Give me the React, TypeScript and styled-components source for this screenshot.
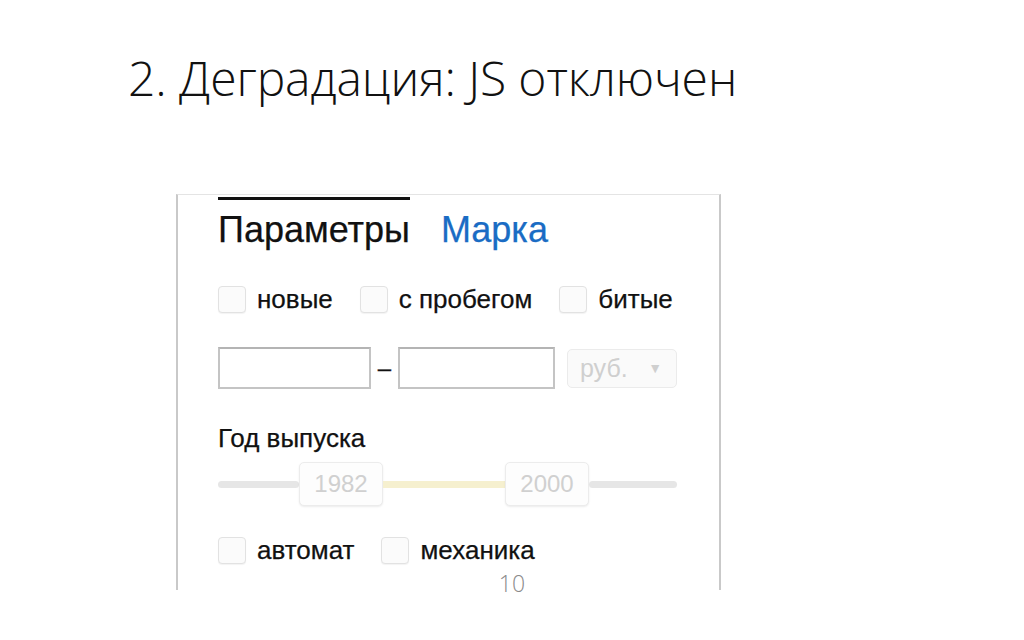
import styled, { createGlobalStyle } from 'styled-components';

const GlobalStyle = createGlobalStyle`
  html, body {
    margin: 0;
    padding: 0;
    background: #ffffff;
  }
`;

const Slide = styled.div`
  position: relative;
  width: 1024px;
  height: 640px;
  overflow: hidden;
  background: #ffffff;
`;

const Title = styled.h1`
  margin: 0;
  padding: 46px 0 0 128px;
  font-family: 'Open Sans', sans-serif;
  font-weight: 300;
  font-size: 48px;
  line-height: 64px;
  color: #111;
  letter-spacing: -0.1px;
`;

const Shot = styled.div`
  box-sizing: border-box;
  margin: 84px 0 0 176px;
  width: 545px;
  height: 396px;
  border-top: 1px solid #e4e4e4;
  border-left: 2px solid #c9c9c9;
  border-right: 2px solid #c9c9c9;
  padding-left: 40px;
  display: flex;
  flex-direction: column;
  font-family: 'Liberation Sans', Arial, sans-serif;
  color: #111;
  -webkit-text-stroke: 0.25px currentColor;
`;

const Tabs = styled.div`
  display: flex;
  gap: 31px;
  margin-top: 2px;
`;

const Tab = styled.div<{ $active?: boolean }>`
  border-top: 3px solid ${p => (p.$active ? '#111' : 'transparent')};
  padding-top: 10px;
  font-size: 36px;
  line-height: 40px;
  color: ${p => (p.$active ? '#111' : '#1a6cc4')};
`;

const Row = styled.div<{ $mt: number }>`
  display: flex;
  align-items: center;
  margin-top: ${p => p.$mt}px;
`;

const Check = styled.label`
  display: flex;
  align-items: center;
  margin-right: 27px;
  font-size: 26px;
  line-height: 27px;
`;

const Box = styled.span`
  box-sizing: border-box;
  width: 28px;
  height: 27px;
  margin-right: 11px;
  border: 1px solid #e2e2e2;
  border-radius: 4px;
  background: #fbfbfb;
  box-shadow: 0 1px 1px rgba(0, 0, 0, 0.05);
`;

const Input = styled.div<{ $w: number }>`
  box-sizing: border-box;
  width: ${p => p.$w}px;
  height: 42px;
  border: 2px solid #c4c4c4;
  border-top-color: #b4b4b4;
  background: #fff;
`;

const Dash = styled.span`
  width: 27px;
  text-align: center;
  font-size: 24px;
  line-height: 30px;
`;

const Select = styled.div`
  box-sizing: border-box;
  width: 110px;
  height: 39px;
  margin-left: 12px;
  padding: 0 14px 0 12px;
  display: flex;
  align-items: center;
  justify-content: space-between;
  border: 1px solid #ebebeb;
  border-radius: 5px;
  background: #fafafa;
  color: #cfcfcf;
  font-size: 25px;
  -webkit-text-stroke: 0;
`;

const Arrow = styled.span`
  font-size: 14px;
  color: #cfcfcf;
`;

const Label = styled.div`
  margin-top: 35px;
  font-size: 26px;
  line-height: 28px;
`;

const Slider = styled.div`
  display: flex;
  align-items: center;
  margin-top: 10px;
  height: 44px;
`;

const Track = styled.div<{ $w: number; $range?: boolean }>`
  width: ${p => p.$w}px;
  height: 7px;
  background: ${p => (p.$range ? '#f6f0cf' : '#e6e6e6')};
  border-radius: ${p => (p.$range ? '0' : '4px')};
`;

const Handle = styled.div`
  box-sizing: border-box;
  width: 84px;
  height: 44px;
  display: flex;
  align-items: center;
  justify-content: center;
  border: 1px solid #ececec;
  border-radius: 5px;
  background: #fdfdfd;
  box-shadow: 0 1px 2px rgba(0, 0, 0, 0.08);
  color: #d0d0d0;
  font-size: 24px;
  -webkit-text-stroke: 0;
`;

const PageNum = styled.div`
  position: absolute;
  left: 0;
  right: 0;
  top: 567px;
  text-align: center;
  font-family: 'Open Sans', sans-serif;
  font-weight: 300;
  font-size: 23px;
  color: #8a8a8a;
`;

export default function App() {
  return (
    <Slide>
      <GlobalStyle />
      <Title>2. Деградация: JS отключен</Title>
      <Shot>
        <Tabs>
          <Tab $active>Параметры</Tab>
          <Tab>Марка</Tab>
        </Tabs>
        <Row $mt={36}>
          <Check><Box />новые</Check>
          <Check><Box />с пробегом</Check>
          <Check><Box />битые</Check>
        </Row>
        <Row $mt={34}>
          <Input $w={153} />
          <Dash>–</Dash>
          <Input $w={157} />
          <Select>
            руб.<Arrow>▼</Arrow>
          </Select>
        </Row>
        <Label>Год выпуска</Label>
        <Slider>
          <Track $w={81} />
          <Handle>1982</Handle>
          <Track $w={122} $range />
          <Handle>2000</Handle>
          <Track $w={88} />
        </Slider>
        <Row $mt={31}>
          <Check><Box />автомат</Check>
          <Check><Box />механика</Check>
        </Row>
      </Shot>
      <PageNum>10</PageNum>
    </Slide>
  );
}
